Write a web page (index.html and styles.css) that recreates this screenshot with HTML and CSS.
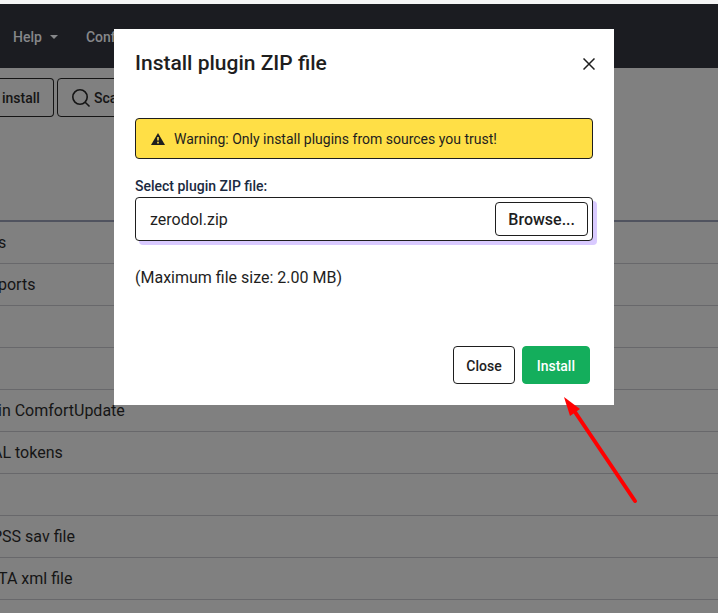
FILE: index.html
```html
<!DOCTYPE html>
<html lang="en">
<head>
<meta charset="utf-8">
<title>Plugin manager</title>
<link rel="stylesheet" href="styles.css">
</head>
<body>
<div class="page">
  <nav class="navbar">
    <a href="#" class="nav-link">Help <span class="caret"></span></a>
    <a href="#" class="nav-link">Configuration</a>
  </nav>
  <div class="toolbar">
    <button class="tool first" type="button">install</button>
    <button class="tool" type="button"><svg width="20" height="20" viewBox="0 0 20 20" fill="none" stroke="currentColor" stroke-width="1.6"><circle cx="9" cy="9" r="7.2"/><path d="M14.2 14.2 18.5 18.5"/></svg>Scan files</button>
  </div>
  <table class="plugins">
    <thead><tr><th></th></tr></thead>
    <tbody>
      <tr><td>s</td></tr>
      <tr><td>ports</td></tr>
      <tr><td></td></tr>
      <tr><td></td></tr>
      <tr><td>in ComfortUpdate</td></tr>
      <tr><td class="cut">AL tokens</td></tr>
      <tr><td></td></tr>
      <tr><td class="cut">PSS sav file</td></tr>
      <tr><td>TA xml file</td></tr>
      <tr><td></td></tr>
    </tbody>
  </table>
</div>
<div class="backdrop">
  <div class="modal" role="dialog" aria-modal="true" aria-labelledby="title">
    <header class="modal-header">
      <h1 id="title">Install plugin ZIP file</h1>
      <button class="dismiss" type="button" aria-label="Close dialog"><svg width="12" height="12" viewBox="0 0 12 12" stroke="currentColor" stroke-width="1.5"><path d="M.5.5 11.5 11.5M11.5.5.5 11.5"/></svg></button>
    </header>
    <div class="modal-body">
      <div class="alert" role="alert">
        <svg width="14" height="12" viewBox="0 0 14 12"><path d="M7 0 14 12H0Z" fill="#1e1e1e"/><path d="M6.2 4h1.6v3.6H6.2zM6.2 8.8h1.6v1.6H6.2z" fill="#ffdf46"/></svg>
        <span>Warning: Only install plugins from sources you trust!</span>
      </div>
      <label for="zip">Select plugin ZIP file:</label>
      <div class="file">
        <input id="zip" type="text" value="zerodol.zip" readonly>
        <button type="button" class="browse">Browse...</button>
      </div>
      <p>(Maximum file size: 2.00 MB)</p>
    </div>
    <footer class="modal-footer">
      <button type="button" class="btn">Close</button>
      <button type="button" class="btn primary">Install</button>
    </footer>
  </div>
</div>
<svg class="arrow" width="74" height="108" viewBox="0 0 74 108" aria-hidden="true"><path d="M11 15 71 104" stroke="#f00" stroke-width="4" stroke-linecap="round"/><path d="M0 0 16 12 6 19Z" fill="#f00"/></svg>
</body>
</html>
```
FILE: styles.css
```css
* { box-sizing: border-box; }
body {
  margin: 0;
  height: 100vh;
  overflow: hidden;
  font: 16px/24px Roboto, sans-serif;
  color: #1e1e1e;
  background: #808080;
}
button, input { font: inherit; color: inherit; background: none; }
.page { height: 100vh; overflow: hidden; border-top: 4px solid #f5f5f5; color: #151515; }
.navbar { height: 64px; padding: 2px 13px 0; display: flex; align-items: center; gap: 28px; background: #1b1c21; }
.nav-link { color: #86878a; font-size: 14px; font-weight: 500; text-decoration: none; display: flex; align-items: center; gap: 8px; }
.caret { border: 4px solid transparent; border-top-color: currentColor; border-bottom: 0; }
.toolbar { display: flex; gap: 3px; padding: 10px 0; }
.tool { height: 39px; padding: 0 12px 0 13px; display: flex; align-items: center; gap: 3px; border: 1px solid #151515; border-radius: 4px; font-size: 14px; font-weight: 500; }
.tool.first { border-left: 0; border-radius: 0 4px 4px 0; padding-left: 2px; padding-right: 13px; }
.plugins { width: 100%; border-collapse: collapse; }
th { height: 94px; border-bottom: 2px solid #50535f; padding: 0; }
td { height: 42px; padding: 2px 0 0; border-bottom: 1px solid #68686b; text-indent: -2px; }
.cut { text-indent: -8px; }
.backdrop { position: fixed; inset: 0; padding: 29px 0 29px 10px; }
.modal { width: 500px; margin: 0 auto; background: #fff; }
.modal-header { display: flex; justify-content: space-between; align-items: center; padding: 20px 18px 20px 21px; }
h1 { margin: 0; font-size: 21px; line-height: 28px; font-weight: 500; }
.dismiss { width: 14px; height: 28px; border: 0; padding: 2px 0 0; display: grid; place-items: center; }
.modal-body { padding: 21px 21px 0; }
.alert { height: 41px; display: flex; align-items: center; gap: 9px; padding: 0 15px; border: 1px solid #1e1e1e; border-radius: 4px; background: #ffdf46; font-size: 14px; }
label { display: block; margin-top: 17px; font-size: 14px; line-height: 21px; font-weight: 500; color: #1b2a41; }
.file { display: flex; align-items: center; height: 44px; padding: 0 4px 0 14px; border: 1px solid #1e1e1e; border-radius: 4px; box-shadow: 4px 4px 0 #d9caff; background: #fff; }
.file input { flex: 1; min-width: 0; border: 0; padding: 2px 0 0; outline: 0; }
.browse { height: 34px; padding: 2px 12px 0; border: 1px solid #1e1e1e; border-radius: 4px; font-weight: 500; }
p { margin: 25px 0 0; }
.modal-footer { display: flex; justify-content: flex-end; gap: 7px; padding: 56px 24px 21px; }
.btn { height: 38px; padding: 2px 12px 0; border: 1px solid #1e1e1e; border-radius: 4px; font-size: 14px; font-weight: 500; }
.primary { padding: 2px 14px 0; border-color: #14ae5c; background: #14ae5c; color: #fff; }
.arrow { position: absolute; left: 564px; top: 397px; }
```
